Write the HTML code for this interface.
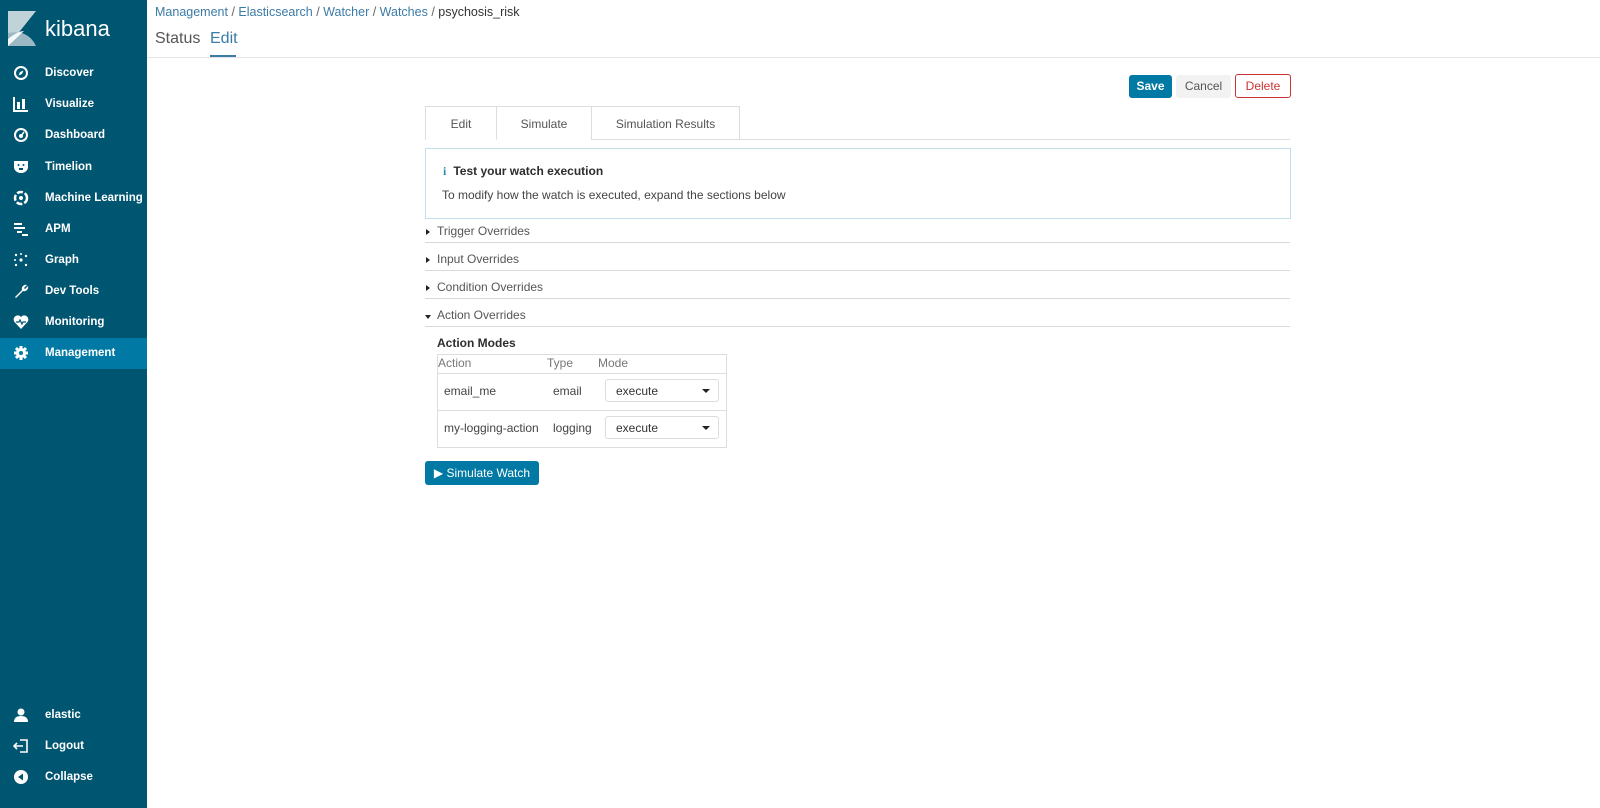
<!DOCTYPE html>
<html><head><meta charset="utf-8"><style>
*{box-sizing:border-box;margin:0;padding:0}
body{width:1600px;height:808px;overflow:hidden;background:#fff;font-family:"Liberation Sans",sans-serif;color:#2d2d2d;position:relative}
.abs{position:absolute}
#side{left:0;top:0;width:147px;height:808px;background:#005571}
.nav{position:absolute;left:0;width:147px;height:31px;color:#fff;font-size:11.5px;font-weight:bold}
.nav span{position:absolute;left:45px;top:0;line-height:31px}
.nav svg{position:absolute;left:13px;top:7px}
.nav.act{background:#0079a5}
.t{position:absolute;white-space:nowrap}
.btn{position:absolute;height:23px;border-radius:3px;font-size:12px;text-align:center;line-height:23px}
.acc{position:absolute;left:425px;width:865px;border-bottom:1px solid #d9d9d9;height:28px;font-size:12px;color:#555}
.acc span{position:absolute;left:12px;top:9px}
.acc i{position:absolute;left:1px;top:14px;width:0;height:0;border-top:3px solid transparent;border-bottom:3px solid transparent;border-left:4px solid #222}
.acc i.d{top:16px;border-left:3px solid transparent;border-right:3px solid transparent;border-top:4px solid #222;border-bottom:0;left:0}
.sel{position:absolute;left:605px;width:114px;height:23px;border:1px solid #ddd;border-radius:3px;font-size:12px;color:#333;padding:4px 10px}
.sel:after{content:"";position:absolute;right:8px;top:9px;border-left:4px solid transparent;border-right:4px solid transparent;border-top:4px solid #222}
</style></head><body>
<div id="side" class="abs">
<svg class="abs" style="left:8px;top:11px" width="28" height="35" viewBox="0 0 28 35"><polygon points="0,0 28,0 0,35" fill="#c0d3d9"/><path d="M0,35 L0,22 Q20,18 28,35 Z" fill="#9cb8c2"/><path d="M0,35 L0,28 Q10,20 16,20 L0,35Z" fill="#fff" opacity=".9"/></svg>
<div class="t" style="left:45px;top:16px;color:#fff;font-size:22px">kibana</div>
<div class="nav" style="top:58px"><svg width="16" height="16" viewBox="0 0 16 16"><circle cx="8" cy="8" r="6" fill="none" stroke="#fff" stroke-width="2"/><path d="M10.5 5.5 L7 7 L5.5 10.5 L9 9Z" fill="#fff"/></svg><span>Discover</span></div>
<div class="nav" style="top:89px"><svg width="16" height="16" viewBox="0 0 16 16"><path d="M1 1v14h14" stroke="#fff" stroke-width="2" fill="none"/><rect x="4" y="6" width="3" height="7" fill="#fff"/><rect x="9" y="3" width="3" height="10" fill="#fff"/></svg><span>Visualize</span></div>
<div class="nav" style="top:120px"><svg width="16" height="16" viewBox="0 0 16 16"><circle cx="8" cy="8" r="6" fill="none" stroke="#fff" stroke-width="2"/><circle cx="8" cy="9" r="2" fill="#fff"/><path d="M8 9 L11 5" stroke="#fff" stroke-width="1.5"/></svg><span>Dashboard</span></div>
<div class="nav" style="top:152px"><svg width="16" height="16" viewBox="0 0 16 16"><path d="M1 2h14v6a7 6 0 0 1-14 0z" fill="#fff"/><circle cx="5.5" cy="6" r="1" fill="#005571"/><circle cx="10.5" cy="6" r="1" fill="#005571"/><rect x="6" y="9" width="4" height="2" fill="#005571"/></svg><span>Timelion</span></div>
<div class="nav" style="top:183px"><svg width="16" height="16" viewBox="0 0 16 16"><circle cx="8" cy="8" r="6" fill="none" stroke="#fff" stroke-width="2.5" stroke-dasharray="6 2"/><circle cx="8" cy="8" r="2" fill="#fff"/></svg><span>Machine Learning</span></div>
<div class="nav" style="top:214px"><svg width="16" height="16" viewBox="0 0 16 16"><rect x="1" y="2" width="8" height="2" fill="#fff"/><rect x="1" y="6" width="11" height="2" fill="#fff"/><rect x="4" y="10" width="5" height="2" fill="#fff"/><rect x="9" y="13" width="6" height="2" fill="#fff"/></svg><span>APM</span></div>
<div class="nav" style="top:245px"><svg width="16" height="16" viewBox="0 0 16 16" fill="#fff"><circle cx="8" cy="8" r="1.6"/><circle cx="3" cy="3" r="1.2"/><circle cx="13" cy="4" r="1.2"/><circle cx="3" cy="13" r="1.2"/><circle cx="13" cy="13" r="1.2"/><circle cx="8" cy="2" r="1"/><circle cx="2" cy="8" r="1"/></svg><span>Graph</span></div>
<div class="nav" style="top:276px"><svg width="16" height="16" viewBox="0 0 16 16"><path d="M2 14 L9 7 A4 4 0 0 1 14 2 L11 5 L12 6 L15 3 A4 4 0 0 1 10 8 L3 15Z" fill="#fff"/></svg><span>Dev Tools</span></div>
<div class="nav" style="top:307px"><svg width="16" height="16" viewBox="0 0 16 16"><path d="M8 15 L1.5 8 A4 4 0 0 1 8 3 A4 4 0 0 1 14.5 8Z" fill="#fff"/><path d="M3 8h3l1-2 2 4 1-2h3" stroke="#005571" stroke-width="1.2" fill="none"/></svg><span>Monitoring</span></div>
<div class="nav act" style="top:338px"><svg width="16" height="16" viewBox="0 0 16 16"><circle cx="8" cy="8" r="5" fill="#fff"/><g stroke="#fff" stroke-width="3"><path d="M8 1v14M1 8h14M3 3l10 10M13 3L3 13"/></g><circle cx="8" cy="8" r="2" fill="#0079a5"/></svg><span>Management</span></div>
<div class="nav" style="top:700px"><svg width="16" height="16" viewBox="0 0 16 16"><circle cx="8" cy="5" r="3.5" fill="#fff"/><path d="M1 15 Q1 9 8 9 Q15 9 15 15Z" fill="#fff"/></svg><span>elastic</span></div>
<div class="nav" style="top:731px"><svg width="16" height="16" viewBox="0 0 16 16"><path d="M7 2h7v12H7" stroke="#fff" stroke-width="1.6" fill="none"/><path d="M1 8h9M4 5L1 8l3 3" stroke="#fff" stroke-width="1.6" fill="none"/></svg><span>Logout</span></div>
<div class="nav" style="top:762px"><svg width="16" height="16" viewBox="0 0 16 16"><circle cx="8" cy="8" r="7" fill="#fff"/><path d="M10 4.5v7L5 8Z" fill="#005571"/></svg><span>Collapse</span></div>
</div>

<div class="t" style="left:155px;top:5px;font-size:12.5px;color:#3b7ba6">Management <span style="color:#666">/</span> Elasticsearch <span style="color:#666">/</span> Watcher <span style="color:#666">/</span> Watches <span style="color:#666">/</span> <span style="color:#333">psychosis_risk</span></div>
<div class="t" style="left:155px;top:30px;font-size:16px;color:#555">Status</div>
<div class="t" style="left:210px;top:30px;font-size:16px;color:#3b7ba6">Edit</div>
<div class="abs" style="left:210px;top:55px;width:26px;height:2px;background:#3b7ba6"></div>
<div class="abs" style="left:147px;top:57px;width:1453px;height:1px;background:#e4e4e4"></div>

<div class="btn" style="left:1129px;top:75px;width:43px;background:#0079a5;color:#fff;font-weight:bold">Save</div>
<div class="btn" style="left:1176px;top:75px;width:55px;background:#f2f2f2;color:#555">Cancel</div>
<div class="btn" style="left:1235px;top:74px;width:56px;height:24px;border:1px solid #c33;color:#c33;line-height:22px">Delete</div>

<div class="abs" style="left:425px;top:139px;width:865px;height:1px;background:#ddd"></div>
<div class="abs" style="left:425px;top:106px;width:72px;height:34px;border:1px solid #ddd;border-bottom:none;background:#fff;font-size:12px;color:#555;text-align:center;line-height:34px">Edit</div>
<div class="abs" style="left:496px;top:106px;width:96px;height:34px;border:1px solid #ddd;border-bottom:1px solid #fff;background:#fff;font-size:12px;color:#555;text-align:center;line-height:34px">Simulate</div>
<div class="abs" style="left:591px;top:106px;width:149px;height:34px;border:1px solid #ddd;background:#fff;font-size:12px;color:#555;text-align:center;line-height:34px">Simulation Results</div>

<div class="abs" style="left:425px;top:148px;width:866px;height:71px;border:1px solid #bfe0ea">
<div class="t" style="left:17px;top:15px;font-size:12px;font-weight:bold;color:#2d2d2d"><span style="color:#3b8aab;font-family:'Liberation Serif',serif;margin-right:7px">i</span>Test your watch execution</div>
<div class="t" style="left:16px;top:39px;font-size:12px;color:#444">To modify how the watch is executed, expand the sections below</div>
</div>

<div class="acc" style="top:215px"><i></i><span>Trigger Overrides</span></div>
<div class="acc" style="top:243px"><i></i><span>Input Overrides</span></div>
<div class="acc" style="top:271px"><i></i><span>Condition Overrides</span></div>
<div class="acc" style="top:299px"><i class="d"></i><span>Action Overrides</span></div>

<div class="t" style="left:437px;top:336px;font-size:12px;font-weight:bold">Action Modes</div>
<div class="abs" style="left:437px;top:354px;width:290px;height:94px;border:1px solid #ddd"></div>
<div class="abs" style="left:437px;top:373px;width:290px;height:1px;background:#ddd"></div>
<div class="abs" style="left:437px;top:410px;width:290px;height:1px;background:#ddd"></div>
<div class="t" style="left:438px;top:356px;font-size:12px;color:#777">Action</div>
<div class="t" style="left:547px;top:356px;font-size:12px;color:#777">Type</div>
<div class="t" style="left:598px;top:356px;font-size:12px;color:#777">Mode</div>
<div class="t" style="left:444px;top:384px;font-size:12px;color:#444">email_me</div>
<div class="t" style="left:553px;top:384px;font-size:12px;color:#444">email</div>
<div class="sel" style="top:379px">execute</div>
<div class="t" style="left:444px;top:421px;font-size:12px;color:#444">my-logging-action</div>
<div class="t" style="left:553px;top:421px;font-size:12px;color:#444">logging</div>
<div class="sel" style="top:416px">execute</div>

<div class="btn" style="left:425px;top:461px;width:114px;height:24px;background:#0079a5;color:#fff;line-height:24px">&#9654; Simulate Watch</div>
</body></html>
